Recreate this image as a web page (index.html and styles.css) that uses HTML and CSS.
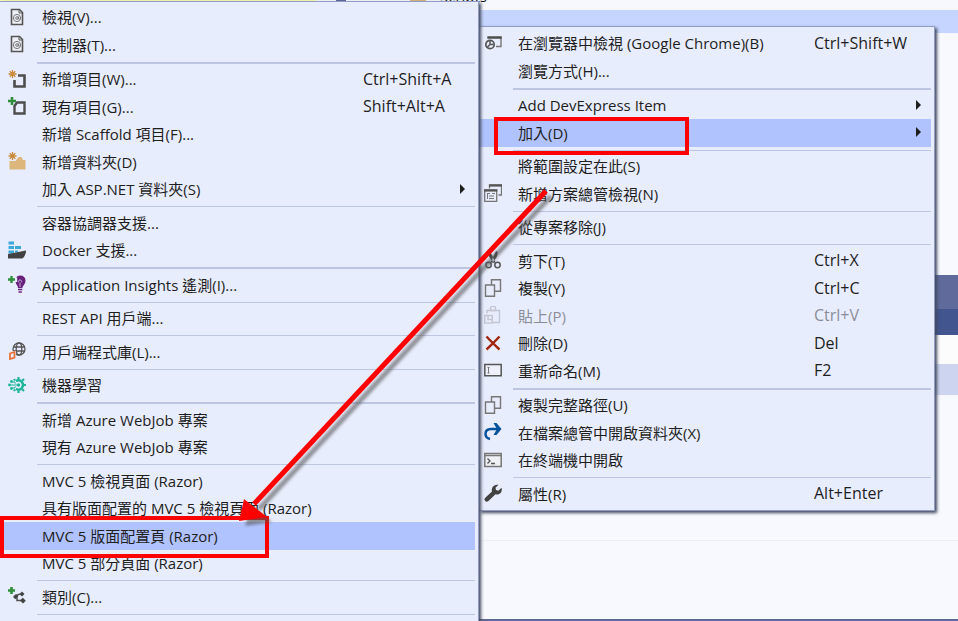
FILE: index.html
```
<!DOCTYPE html>
<html lang="zh-Hant">
    <head>
        <meta charset="utf-8">
        <title>加入</title>
        <link rel="stylesheet" href="styles.css">
    </head>
    <body>
        <!-- window behind the menus -->
        <div class="workspace">
            <div class="tree-top">
                <span class="tree-mark"></span>
                <span class="tree-folder"></span>
                <span class="tree-name">Scripts</span>
            </div>
            <div class="tree-selected"></div>
            <div class="tree-rest"></div>
            <div class="panel-title"></div>
            <div class="panel-tabs"></div>
            <div class="panel-tools"></div>
            <div class="panel-row"></div>
            <div class="panel-body"></div>
            <div class="panel-help"></div>
        </div>

        <div class="menus">
            <div class="menu submenu">
                <button class="item"><span class="icon"><svg viewBox="0 0 18 18"><path d="M3.5 1.5h8l3 3v12h-11z" fill="#eef0f8" stroke="#555" stroke-width="1.6"/><path d="M11 1.5v3.500h3.500" fill="none" stroke="#555"/><circle cx="9" cy="10" r="3.600" fill="none" stroke="#777"/><circle cx="9" cy="10" r="1.300" fill="none" stroke="#777"/><path d="M10.500 8.500v2.500q1 .8 2-.8" fill="none" stroke="#777"/></svg></span><span class="label">檢視(V)...</span></button>
                <button class="item"><span class="icon"><svg viewBox="0 0 18 18"><path d="M3.5 1.5h8l3 3v12h-11z" fill="#eef0f8" stroke="#555" stroke-width="1.6"/><path d="M11 1.5v3.500h3.500" fill="none" stroke="#555"/><circle cx="9" cy="10" r="3.600" fill="none" stroke="#777"/><circle cx="9" cy="10" r="1.300" fill="none" stroke="#777"/><path d="M10.500 8.500v2.500q1 .8 2-.8" fill="none" stroke="#777"/></svg></span><span class="label">控制器(T)...</span></button>
                <hr class="sep thick">
                <button class="item"><span class="icon"><svg viewBox="0 0 18 18"><path d="M4.500 0v8M.5 4h8M1.700 1.200l5.600 5.600M7.300 1.200L1.700 6.800" stroke="#cb8b3c" stroke-width="1.300"/><path d="M10 5.500h6.500v11h-10V10" fill="none" stroke="#4d4d4d" stroke-width="2.600"/></svg></span><span class="label">新增項目(W)...</span><span class="keys">Ctrl+Shift+A</span></button>
                <button class="item"><span class="icon"><svg viewBox="0 0 18 18"><path d="M4 0v8M0 4h8" stroke="#2f8f3a" stroke-width="2.600"/><path d="M9 5.500h7.500v11h-10V9z" fill="none" stroke="#4d4d4d" stroke-width="2.400"/></svg></span><span class="label">現有項目(G)...</span><span class="keys">Shift+Alt+A</span></button>
                <button class="item"><span class="icon"></span><span class="label">新增 Scaffold 項目(F)...</span></button>
                <button class="item"><span class="icon"><svg viewBox="0 0 18 18"><path d="M1.500 9h6l3-4h3l1.500 3h2.500v9.500h-16z" fill="#dcb67a"/><path d="M4.500 0v8M.5 4h8M1.700 1.200l5.600 5.600M7.300 1.200L1.700 6.800" stroke="#cb8b3c" stroke-width="1.300"/></svg></span><span class="label">新增資料夾(D)</span></button>
                <button class="item"><span class="icon"></span><span class="label">加入 ASP.NET 資料夾(S)</span><span class="arrow"></span></button>
                <hr class="sep">
                <button class="item"><span class="icon"></span><span class="label">容器協調器支援...</span></button>
                <button class="item"><span class="icon"><svg viewBox="0 0 18 18"><path d="M.5.5H6v3H.5zM.5 5H6v3H.5zM7 5h6v3H7zM.5 9.500H6v3H.5zM7 9.500h3v2H7z" fill="#3ba9d8"/><path d="M0 13l8-1.500L18.500 9.500q-2 8-5 8H0z" fill="#424242"/></svg></span><span class="label">Docker 支援...</span></button>
                <hr class="sep thick">
                <button class="item"><span class="icon"><svg viewBox="0 0 18 18"><path d="M3.500 1v7M0 4.500h7" stroke="#2f8f3a" stroke-width="2.400"/><path d="M8 2.500Q9.500.5 12 .5q5.500 0 5.500 5.500 0 2.500-2 4.500-1 1-1.200 2.500H10q0-2-1.500-3.500l-1-2.500h1.700V2.500z" fill="#68217a"/><path d="M12 12V8M11 7.500a1.500 1.500 0 1 1 2 0" fill="none" stroke="#c9addb"/><path d="M10 14.500h4.300M10.500 17h3.300" stroke="#68217a" stroke-width="1.500"/></svg></span><span class="label">Application Insights 遙測(I)...</span></button>
                <hr class="sep">
                <button class="item"><span class="icon"></span><span class="label">REST API 用戶端...</span></button>
                <hr class="sep">
                <button class="item"><span class="icon"><svg viewBox="0 0 18 18"><g fill="none" stroke="#555" stroke-width="1.300"><circle cx="11" cy="7" r="6"/><ellipse cx="11" cy="7" rx="2.800" ry="6"/><path d="M5 5h12M5 9h12"/></g><path d="M0 9h8v9H0z" fill="#e8edfd"/><path d="M2 11.500l4.500-1.500v5.500L2 17z" fill="none" stroke="#e8703a" stroke-width="1.800"/></svg></span><span class="label">用戶端程式庫(L)...</span></button>
                <hr class="sep">
                <button class="item"><span class="icon"><svg viewBox="0 0 18 18"><g fill="none" stroke="#1fb59a"><path d="M8 5.200a4.500 4.500 0 1 1 0 7.600" stroke-width="2.400"/><path d="M10.500 1v3M10.500 14v3M15 9h3M14 5l2-2M14 13l2 2M7 4.500L6 3M7 13.500L6 15" stroke-width="2.200"/><path d="M2 9h8M4 6h2.500l1 1.500M4 12h2.500l1-1.500" stroke-width="1.200"/></g><g fill="#1fb59a"><circle cx="1.500" cy="9" r="1.400"/><circle cx="3.500" cy="5.500" r="1.400"/><circle cx="3.500" cy="12.500" r="1.400"/><circle cx="10.500" cy="9" r="1.700"/></g></svg></span><span class="label">機器學習</span></button>
                <hr class="sep thick">
                <button class="item"><span class="icon"></span><span class="label">新增 Azure WebJob 專案</span></button>
                <button class="item"><span class="icon"></span><span class="label">現有 Azure WebJob 專案</span></button>
                <hr class="sep">
                <button class="item"><span class="icon"></span><span class="label">MVC 5 檢視頁面 (Razor)</span></button>
                <button class="item"><span class="icon"></span><span class="label">具有版面配置的 MVC 5 檢視頁面 (Razor)</span></button>
                <button class="item active"><span class="icon"></span><span class="label">MVC 5 版面配置頁 (Razor)</span></button>
                <button class="item"><span class="icon"></span><span class="label">MVC 5 部分頁面 (Razor)</span></button>
                <hr class="sep">
                <button class="item"><span class="icon"><svg viewBox="0 0 18 18"><path d="M3.500 0v7M0 3.500h7" stroke="#2f8f3a" stroke-width="2.600"/><path d="M6 9.500l6-2.500M9 9v4.500h5" fill="none" stroke="#555" stroke-width="1.600"/><path d="M5 10l3-3 2.300 2.300-3 3zM11.500 7L14 4.500 16.500 7 14 9.500zM12 13.500l2.800-2.800 3 3-2.800 2.800z" fill="#444"/></svg></span><span class="label">類別(C)...</span></button>
                <hr class="sep">
            </div>

            <div class="menu context">
                <button class="item"><span class="icon"><svg viewBox="0 0 18 18"><path d="M4 3.500h13v9h-5" fill="none" stroke="#777" stroke-width="1.400"/><path d="M3.300 3.500h14.400" stroke="#4d4d4d" stroke-width="2.400"/><circle cx="6" cy="10.500" r="4.200" fill="#e8edfd" stroke="#555" stroke-width="1.700"/><path d="M6 7v3.500h3.500M6 10.500L3.500 13" fill="none" stroke="#555" stroke-width="1.500"/></svg></span><span class="label">在瀏覽器中檢視 (Google Chrome)(B)</span><span class="keys">Ctrl+Shift+W</span></button>
                <button class="item"><span class="icon"></span><span class="label">瀏覽方式(H)...</span></button>
                <hr class="sep thick">
                <button class="item"><span class="icon"></span><span class="label">Add DevExpress Item</span><span class="arrow"></span></button>
                <button class="item active"><span class="icon"></span><span class="label">加入(D)</span><span class="arrow"></span></button>
                <hr class="sep">
                <button class="item"><span class="icon"></span><span class="label">將範圍設定在此(S)</span></button>
                <button class="item"><span class="icon"><svg viewBox="0 0 18 18"><path d="M5.500 4.500V1h12v10h-3" fill="none" stroke="#777" stroke-width="1.300"/><path d="M5 1.500h13" stroke="#555" stroke-width="2.200"/><path d="M.7 6h12v11.300H.7z" fill="#e8edfd" stroke="#777" stroke-width="1.300"/><path d="M0 6.500h13.300" stroke="#555" stroke-width="2.200"/><path d="M3 9.500h3M5 12h5M5 14.500h5M8 9.500h3M3.500 10v5" fill="none" stroke="#777"/></svg></span><span class="label">新增方案總管檢視(N)</span></button>
                <hr class="sep">
                <button class="item"><span class="icon"></span><span class="label">從專案移除(J)</span></button>
                <hr class="sep">
                <button class="item"><span class="icon"><svg viewBox="0 0 18 18"><path d="M4.500.5L6 .2l5.500 11-2 .5-4-5.500Q4 3.500 4.500.5zM13.500.5L12 .2l-5.500 11 2 .5 4-5.500q1.500-2.700 1-5.700z" fill="#424242"/><g fill="none" stroke="#555" stroke-width="1.500"><circle cx="4.500" cy="14" r="2.700"/><circle cx="13.500" cy="14" r="2.700"/></g></svg></span><span class="label">剪下(T)</span><span class="keys">Ctrl+X</span></button>
                <button class="item"><span class="icon"><svg viewBox="0 0 18 18"><g fill="#e8edfd" stroke="#777" stroke-width="1.400"><path d="M7.500.8h9v11.500h-9z"/><path d="M1.500 6h9v11.300h-9z"/></g></svg></span><span class="label">複製(Y)</span><span class="keys">Ctrl+C</span></button>
                <button class="item" disabled><span class="icon"><svg viewBox="0 0 18 18"><g fill="none" stroke="#c3c6d2" stroke-width="1.400"><path d="M3 7.500V4.500h12.500v12H9"/><path d="M6.500 4.500v-2a2.500 2.500 0 0 1 5 0v2z"/><path d="M.7 9.500h7.600v7.500H.7zM4 9.500v4h4"/></g></svg></span><span class="label">貼上(P)</span><span class="keys">Ctrl+V</span></button>
                <button class="item"><span class="icon"><svg viewBox="0 0 18 18"><path d="M2.500 2.500q5 5.500 13 13M15.500 2.500q-6 6.500-13 13" fill="none" stroke="#a1260d" stroke-width="2.400"/></svg></span><span class="label">刪除(D)</span><span class="keys">Del</span></button>
                <button class="item"><span class="icon"><svg viewBox="0 0 18 18"><path d="M.8 3.500h16.400v11.300H.8z" fill="#eef1fb" stroke="#555" stroke-width="1.500"/><path d="M3.500 6.500h2M3.500 12h2M4.500 6.500V12" stroke="#777"/></svg></span><span class="label">重新命名(M)</span><span class="keys">F2</span></button>
                <hr class="sep thick">
                <button class="item"><span class="icon"><svg viewBox="0 0 18 18"><g fill="#e8edfd" stroke="#777" stroke-width="1.400"><path d="M7.500.8h9v11.500h-9z"/><path d="M1.500 6h9v11.300h-9z"/></g></svg></span><span class="label">複製完整路徑(U)</span></button>
                <button class="item"><span class="icon"><svg viewBox="0 0 18 18"><path d="M6 16Q1.500 15 1.500 11q0-5 5.500-5h7" fill="none" stroke="#00539c" stroke-width="2.500"/><path d="M9.500 0h3l5 6-5 6h-3l3.500-6z" fill="#00539c"/></svg></span><span class="label">在檔案總管中開啟資料夾(X)</span></button>
                <button class="item"><span class="icon"><svg viewBox="0 0 18 18"><path d="M.8 2.500h16.400v13H.8z" fill="#eef0f6" stroke="#777" stroke-width="1.500"/><path d="M.5 4.500h17" stroke="#777" stroke-width="1.500"/><path d="M3.500 7.500L6 10l-2.500 2.500M7 12.500h4" fill="none" stroke="#555" stroke-width="1.300"/></svg></span><span class="label">在終端機中開啟</span></button>
                <hr class="sep">
                <button class="item"><span class="icon"><svg viewBox="0 0 18 18"><path d="M14.500.8l-3 3 .5 2.300 2.300.7 3.300-3q.8 3.500-1.300 5.500-2 1.700-4.800 1L4.200 17.300q-1.700 1-3-.3t-.2-3L8 7.500q-.8-3 1.200-5.200t5.300-1.500z" fill="#424242"/></svg></span><span class="label">屬性(R)</span><span class="keys">Alt+Enter</span></button>
            </div>
        </div>

        <!-- markup drawn over the menus -->
        <div class="mark mark-add"></div>
        <div class="mark mark-layout"></div>
        <svg class="pointer" width="330" height="350" viewBox="0 0 330 350">
            <defs>
                <filter id="soft" x="-10%" y="-10%" width="120%" height="120%"><feGaussianBlur stdDeviation="1.5"/></filter>
            </defs>
            <g transform="translate(5 5)" fill="#555" stroke="#555" opacity=".6" filter="url(#soft)">
                <path d="M316 11L24 324" fill="none" stroke-width="5"/>
                <path d="M10 341l6-21 21 17z" stroke="none"/>
            </g>
            <path d="M316 11L24 324" fill="none" stroke="#f00" stroke-width="5"/>
            <path d="M9 341l5-22 23 18z" fill="#f00"/>
        </svg>
    </body>
</html>
```
FILE: styles.css
```
body {
    margin: 0;
    min-height: 100vh;
    overflow: hidden;
    background: #f8f9fe;
    font-family: "Open Sans", "Noto Sans CJK TC", sans-serif;
    font-size: 15px;
    color: #1e1e1e;
}

/* window behind the menus */
.workspace {
    position: absolute;
    inset: 0;
    display: flex;
    flex-direction: column;
}

.tree-top {
    display: flex;
    align-items: flex-start;
    height: 10px;
    overflow: hidden;
    background: linear-gradient(90deg, #fafcae 33%, #f6f8fd 33%);
}

.tree-mark {
    width: 10px;
    height: 2px;
    margin-left: 336px;
    background: #5c6896;
}

.tree-folder {
    width: 16px;
    height: 2px;
    margin-left: 64px;
    background: #dcb67a;
}

.tree-name {
    margin-top: -14px;
    margin-left: 14px;
    line-height: 20px;
}

.tree-selected {
    height: 23px;
    background: #c6d5ff;
}

.tree-rest {
    height: 242px;
}

.panel-title {
    height: 34px;
    background: #606b9b;
}

.panel-tabs {
    height: 26px;
    background: #42558e;
}

.panel-tools {
    height: 29px;
    background: #fcfcfd;
}

.panel-row {
    height: 31px;
    background: #ccd4f0;
}

.panel-body {
    height: 145px;
    border-bottom: 1px solid #eceef3;
}

.panel-help {
    flex: 1;
    border-bottom: 2px solid #5c6896;
}

/* menus */
.menus {
    position: relative;
    display: flex;
    align-items: flex-start;
}

.menu {
    box-sizing: border-box;
    padding: 3px 3px 2px 0;
    background: #e8edfd;
    border: 1px solid #909cc6;
    border-left: 0;
    box-shadow: 2px 2px 3px #40485c;
}

.submenu {
    z-index: 1;
    width: 50%;
    min-height: 100vh;
    margin-top: 1px;
    padding-top: 2px;
}

.context {
    flex: 1;
    margin-top: 26px;
    margin-right: 23px;
}

.item {
    display: flex;
    align-items: center;
    box-sizing: border-box;
    width: 100%;
    height: 27px;
    padding: 0 0 2px 8px;
    border: 0;
    background: none;
    font: inherit;
    color: inherit;
    text-align: left;
    white-space: nowrap;
}

.item:nth-of-type(even) {
    height: 28px;
}

.item:hover,
.item.active {
    background: #b1c3ff;
}

.item:disabled {
    background: none;
    color: #8b8e99;
}

.icon {
    width: 34px;
    height: 18px;
}

.icon svg {
    display: block;
    width: 18px;
    height: 18px;
}

.label {
    flex: 1;
}

.keys {
    width: 112px;
    font-size: 16px;
}

.arrow {
    margin-right: 10px;
    border: 5px solid transparent;
    border-left-color: #1e1e1e;
    border-right: 0;
}

.context .item {
    padding-left: 5px;
}

.context .keys {
    width: 117px;
}

.sep {
    height: 1px;
    margin: 3px 0 2px 37px;
    border: 0;
    background: #bcc6e2;
}

.context .sep {
    margin-left: 34px;
}

.sep.thick {
    height: 2px;
}

/* red markup */
.mark {
    position: absolute;
    z-index: 2;
    box-sizing: border-box;
    border: 4px solid #f00;
}

.mark-add {
    top: 117px;
    left: 494px;
    width: 195px;
    height: 38px;
}

.mark-layout {
    top: 516px;
    left: 0;
    width: 269px;
    height: 42px;
}

.pointer {
    position: absolute;
    z-index: 2;
    top: 180px;
    left: 230px;
}
```
